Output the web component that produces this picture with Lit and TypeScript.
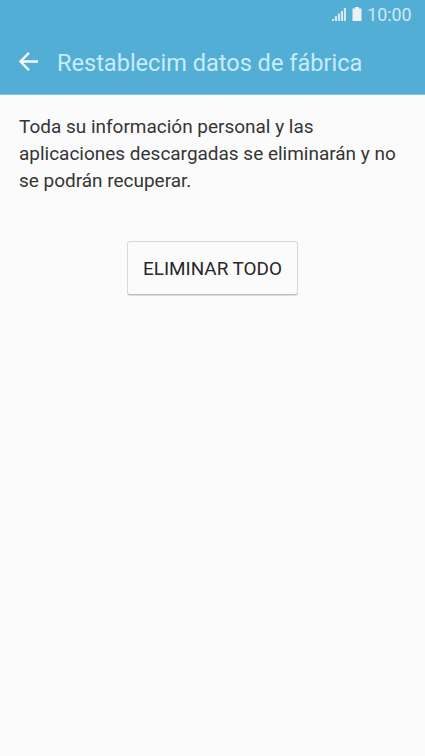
import { LitElement, html, css } from "lit";
import { customElement } from "lit/decorators.js";

@customElement("app-root")
export class AppRoot extends LitElement {
  static styles = css`
    :host { display: flex; flex-direction: column; height: 756px; background: #fbfbfb; font-family: Roboto, "Noto Sans", sans-serif; color: #353535; }
    .status { height: 29px; display: flex; align-items: center; justify-content: flex-end; background: #53aed6; color: #d0e9f3; font-size: 17.8px; padding-right: 13.5px; box-sizing: border-box; }
    .signal { width: 14px; height: 14px; margin: 0 6px 1px 0; }
    .battery { width: 10px; height: 14px; margin: 0 5.2px 1px 0; }
    .bar { height: 66px; display: flex; align-items: center; background: #53aed6; color: #c9ecfa; padding-left: 19px; box-sizing: border-box; border-bottom: 1px solid #8fc3da; }
    .back { width: 19px; height: 20px; margin-right: 19px; }
    .title { font-weight: 400; font-size: 23.55px; line-height: 28px; margin: 2px 0 0; white-space: nowrap; }
    .body { display: flex; flex-direction: column; align-items: center; padding: 18px 19px 0; }
    .text { margin: 0; align-self: stretch; font-size: 18.98px; line-height: 27px; white-space: nowrap; }
    .btn { margin-top: 47px; width: 171px; height: 54px; box-sizing: border-box; border: 1px solid #d8d8d8; border-bottom: 1px solid #bdbdbd; border-radius: 3px; box-shadow: 0 1px 0 #dedede; background: #fbfbfb; font: 400 18.9px Roboto, sans-serif; color: #282828; padding: 1px 0 0; }
  `;

  render() {
    return html`
      <div class="status">
        <svg class="signal" viewBox="0 0 14 14" fill="#d9e9ef"><path d="M0 12h1.9v2H0zM2.9 9.3h2.1V14H2.9zM5.9 6.6H8V14H5.9zM8.9 3.9H11V14H8.9zM11.9 1H14v13h-2.1z" /></svg>
        <svg class="battery" viewBox="0 0 10 14" fill="#edf1f2"><path d="M3 0h4v1.5h2.5V14H.5V1.5H3z" /></svg>
        <span class="time">10:00</span>
      </div>
      <header class="bar">
        <svg class="back" viewBox="0 0 19 20" fill="none" stroke="#f4fafc" stroke-width="2.4"><path d="M19 9.5H2M10 .8L1.5 9.5l8.5 8.7" /></svg>
        <h1 class="title">Restablecim datos de fábrica</h1>
      </header>
      <main class="body">
        <p class="text">Toda su información personal y las<br />aplicaciones descargadas se eliminarán y no<br />se podrán recuperar.</p>
        <button class="btn">ELIMINAR TODO</button>
      </main>
    `;
  }
}
